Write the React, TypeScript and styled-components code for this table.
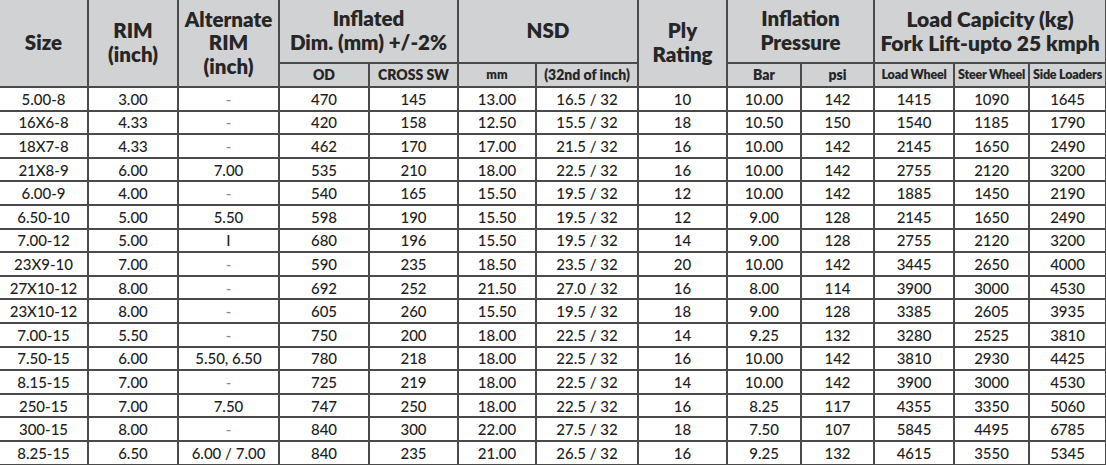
import React from "react";
import styled, { createGlobalStyle } from "styled-components";

const Global = createGlobalStyle`
  html, body { margin: 0; padding: 0; background: #ffffff; }
  body { font-family: "Lato", "Liberation Sans", sans-serif; color: #1e1e1e; }
`;

const Table = styled.table`
  width: 1106px;
  border-collapse: collapse;
  table-layout: fixed;
  font-family: "Lato", "Liberation Sans", sans-serif;
`;

const Head = styled.th<{ $size?: number; $h?: number; $ls?: number }>`
  background: #d1d2d4;
  color: #262626;
  font-weight: 800;
  font-size: ${(p) => p.$size ?? 20.5}px;
  line-height: 1.15;
  letter-spacing: ${(p) => p.$ls ?? 0}px;
  height: ${(p) => p.$h ?? 0}px;
  padding: 0;
  text-align: center;
  vertical-align: middle;
  border: 2px solid #4a4a4a;
  border-top: none;
  white-space: nowrap;
  &:first-child { border-left: none; }
`;

const Cell = styled.td<{ $muted?: boolean }>`
  height: 21.6px;
  padding: 0;
  text-align: center;
  vertical-align: middle;
  font-size: 15px;
  font-weight: 500;
  color: ${(p) => (p.$muted ? "#8a8a8a" : "#1e1e1e")};
  border: 2px solid #4a4a4a;
  white-space: nowrap;
  &:first-child { border-left: none; }
`;

const widths = [88, 90, 101, 90, 89, 78, 102, 89, 74, 73, 80, 75, 77];

const rows: string[][] = [
  ["5.00-8", "3.00", "-", "470", "145", "13.00", "16.5 / 32", "10", "10.00", "142", "1415", "1090", "1645"],
  ["16X6-8", "4.33", "-", "420", "158", "12.50", "15.5 / 32", "18", "10.50", "150", "1540", "1185", "1790"],
  ["18X7-8", "4.33", "-", "462", "170", "17.00", "21.5 / 32", "16", "10.00", "142", "2145", "1650", "2490"],
  ["21X8-9", "6.00", "7.00", "535", "210", "18.00", "22.5 / 32", "16", "10.00", "142", "2755", "2120", "3200"],
  ["6.00-9", "4.00", "-", "540", "165", "15.50", "19.5 / 32", "12", "10.00", "142", "1885", "1450", "2190"],
  ["6.50-10", "5.00", "5.50", "598", "190", "15.50", "19.5 / 32", "12", "9.00", "128", "2145", "1650", "2490"],
  ["7.00-12", "5.00", "I", "680", "196", "15.50", "19.5 / 32", "14", "9.00", "128", "2755", "2120", "3200"],
  ["23X9-10", "7.00", "-", "590", "235", "18.50", "23.5 / 32", "20", "10.00", "142", "3445", "2650", "4000"],
  ["27X10-12", "8.00", "-", "692", "252", "21.50", "27.0 / 32", "16", "8.00", "114", "3900", "3000", "4530"],
  ["23X10-12", "8.00", "-", "605", "260", "15.50", "19.5 / 32", "18", "9.00", "128", "3385", "2605", "3935"],
  ["7.00-15", "5.50", "-", "750", "200", "18.00", "22.5 / 32", "14", "9.25", "132", "3280", "2525", "3810"],
  ["7.50-15", "6.00", "5.50, 6.50", "780", "218", "18.00", "22.5 / 32", "16", "10.00", "142", "3810", "2930", "4425"],
  ["8.15-15", "7.00", "-", "725", "219", "18.00", "22.5 / 32", "14", "10.00", "142", "3900", "3000", "4530"],
  ["250-15", "7.00", "7.50", "747", "250", "18.00", "22.5 / 32", "16", "8.25", "117", "4355", "3350", "5060"],
  ["300-15", "8.00", "-", "840", "300", "22.00", "27.5 / 32", "18", "7.50", "107", "5845", "4495", "6785"],
  ["8.25-15", "6.50", "6.00 / 7.00", "840", "235", "21.00", "26.5 / 32", "16", "9.25", "132", "4615", "3550", "5345"],
];

export default function App() {
  return (
    <>
      <Global />
      <Table>
        <colgroup>
          {widths.map((w, i) => (
            <col key={i} style={{ width: w }} />
          ))}
        </colgroup>
        <thead>
          <tr>
            <Head rowSpan={2}>Size</Head>
            <Head rowSpan={2}>RIM<br />(inch)</Head>
            <Head rowSpan={2}>Alternate<br />RIM<br />(inch)</Head>
            <Head colSpan={2} $h={62}>Inflated<br />Dim. (mm) +/-2%</Head>
            <Head colSpan={2}>NSD</Head>
            <Head rowSpan={2}>Ply<br />Rating</Head>
            <Head colSpan={2}>Inflation<br />Pressure</Head>
            <Head colSpan={3} $size={21}>Load Capicity (kg)<br />Fork Lift-upto 25 kmph</Head>
          </tr>
          <tr>
            <Head $size={14} $h={22}>OD</Head>
            <Head $size={14} $h={22}>CROSS SW</Head>
            <Head $size={12.5} $h={22}>mm</Head>
            <Head $size={14} $h={22}>(32nd of inch)</Head>
            <Head $size={14} $h={22}>Bar</Head>
            <Head $size={14} $h={22}>psi</Head>
            <Head $size={12.5} $h={22} $ls={-0.2}>Load Wheel</Head>
            <Head $size={12.5} $h={22} $ls={-0.2}>Steer Wheel</Head>
            <Head $size={12.5} $h={22} $ls={-0.2}>Side Loaders</Head>
          </tr>
        </thead>
        <tbody>
          {rows.map((r, i) => (
            <tr key={i}>
              {r.map((c, j) => (
                <Cell key={j} $muted={c === "-"}>{c}</Cell>
              ))}
            </tr>
          ))}
        </tbody>
      </Table>
    </>
  );
}
